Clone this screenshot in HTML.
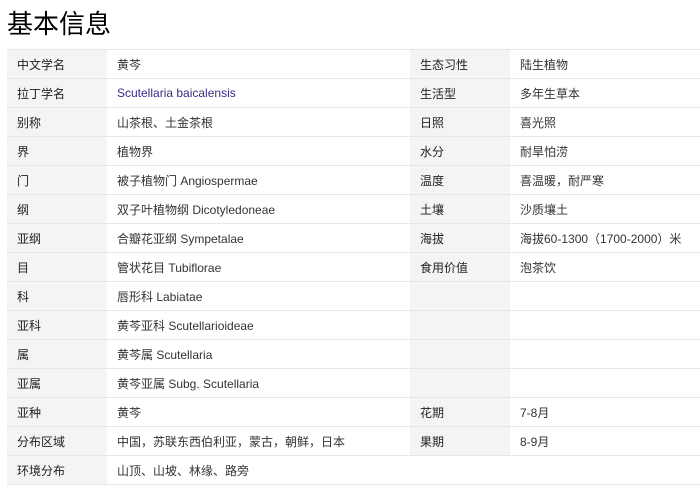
<!DOCTYPE html>
<html><head><meta charset="utf-8"><style>
body{margin:0;background:#fff;width:700px;height:494px;overflow:hidden;font-family:"Liberation Sans","Noto Sans CJK SC",sans-serif;color:#333;}
h1{position:absolute;left:7px;top:7px;margin:0;font-size:26px;font-weight:normal;color:#000;line-height:34px;}
table{position:absolute;left:7px;top:49px;border-collapse:collapse;width:693px;font-size:12px;}
td{height:29px;padding:0 10px;border-top:1px solid #e6e6e6;border-bottom:1px solid #e6e6e6;box-sizing:border-box;}
td.l{background:#f4f4f4;width:100px;color:#222;}
td.v1{width:303px;}
a{color:#3a2c87;text-decoration:none;}
</style></head><body>
<h1>基本信息</h1>
<table>
<tr><td class="l">中文学名</td><td class="v1">黄芩</td><td class="l">生态习性</td><td>陆生植物</td></tr>
<tr><td class="l">拉丁学名</td><td class="v1"><a>Scutellaria baicalensis</a></td><td class="l">生活型</td><td>多年生草本</td></tr>
<tr><td class="l">别称</td><td class="v1">山茶根、土金茶根</td><td class="l">日照</td><td>喜光照</td></tr>
<tr><td class="l">界</td><td class="v1">植物界</td><td class="l">水分</td><td>耐旱怕涝</td></tr>
<tr><td class="l">门</td><td class="v1">被子植物门 Angiospermae</td><td class="l">温度</td><td>喜温暖，耐严寒</td></tr>
<tr><td class="l">纲</td><td class="v1">双子叶植物纲 Dicotyledoneae</td><td class="l">土壤</td><td>沙质壤土</td></tr>
<tr><td class="l">亚纲</td><td class="v1">合瓣花亚纲 Sympetalae</td><td class="l">海拔</td><td>海拔60-1300（1700-2000）米</td></tr>
<tr><td class="l">目</td><td class="v1">管状花目 Tubiflorae</td><td class="l">食用价值</td><td>泡茶饮</td></tr>
<tr><td class="l">科</td><td class="v1">唇形科 Labiatae</td><td class="l"></td><td></td></tr>
<tr><td class="l">亚科</td><td class="v1">黄芩亚科 Scutellarioideae</td><td class="l"></td><td></td></tr>
<tr><td class="l">属</td><td class="v1">黄芩属 Scutellaria</td><td class="l"></td><td></td></tr>
<tr><td class="l">亚属</td><td class="v1">黄芩亚属 Subg. Scutellaria</td><td class="l"></td><td></td></tr>
<tr><td class="l">亚种</td><td class="v1">黄芩</td><td class="l">花期</td><td>7-8月</td></tr>
<tr><td class="l">分布区域</td><td class="v1">中国，苏联东西伯利亚，蒙古，朝鲜，日本</td><td class="l">果期</td><td>8-9月</td></tr>
<tr><td class="l">环境分布</td><td class="v1">山顶、山坡、林缘、路旁</td><td></td><td></td></tr>
</table>
</body></html>
